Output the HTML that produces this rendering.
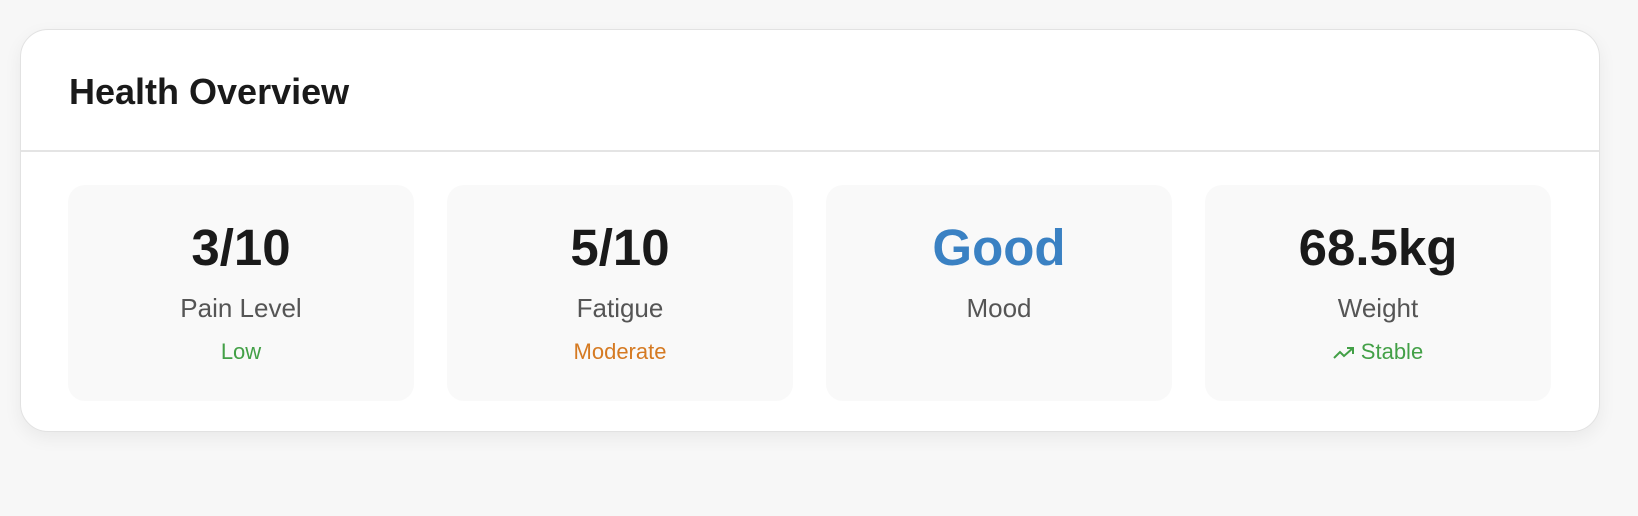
<!DOCTYPE html>
<html><head><style>
body{margin:0;width:1638px;height:516px;background:#f7f7f7;font-family:"Liberation Sans",sans-serif;overflow:hidden}
.card{position:absolute;left:20px;top:29px;width:1580px;height:403px;background:#fff;border:1px solid #e2e2e2;border-radius:28px;box-sizing:border-box;box-shadow:0 6px 18px rgba(0,0,0,0.06)}
.hdr{height:122px;border-bottom:2px solid #e4e4e4;box-sizing:border-box}
.hdr h2{margin:0;position:absolute;left:48px;top:44px;font-size:36px;font-weight:bold;color:#1a1a1a;line-height:1}
.tile{position:absolute;top:155px;width:346px;height:216px;background:#f9f9f9;border-radius:17px;text-align:center}
.v{position:absolute;top:37px;left:0;right:0;font-size:51px;font-weight:bold;color:#1a1a1a;line-height:1}
.l{position:absolute;top:110px;left:0;right:0;font-size:26px;color:#555;line-height:1}
.s{position:absolute;top:156px;left:0;right:0;font-size:22px;line-height:1}
</style></head><body>
<div class="card">
<div class="hdr"><h2>Health Overview</h2></div>
<div class="tile" style="left:47px"><div class="v">3/10</div><div class="l">Pain Level</div><div class="s" style="color:#43a047">Low</div></div>
<div class="tile" style="left:426px"><div class="v">5/10</div><div class="l">Fatigue</div><div class="s" style="color:#d57a22">Moderate</div></div>
<div class="tile" style="left:805px"><div class="v" style="color:#3a81c3">Good</div><div class="l">Mood</div></div>
<div class="tile" style="left:1184px"><div class="v">68.5kg</div><div class="l">Weight</div><div class="s" style="color:#43a047"><svg width="22" height="14" viewBox="0 0 22 14" style="vertical-align:-1px;margin-right:6px"><path d="M1 12 L7 6 L11 10 L20 2 M14 2 H20 V8" fill="none" stroke="#43a047" stroke-width="2"/></svg>Stable</div></div>
</div>
</body></html>
